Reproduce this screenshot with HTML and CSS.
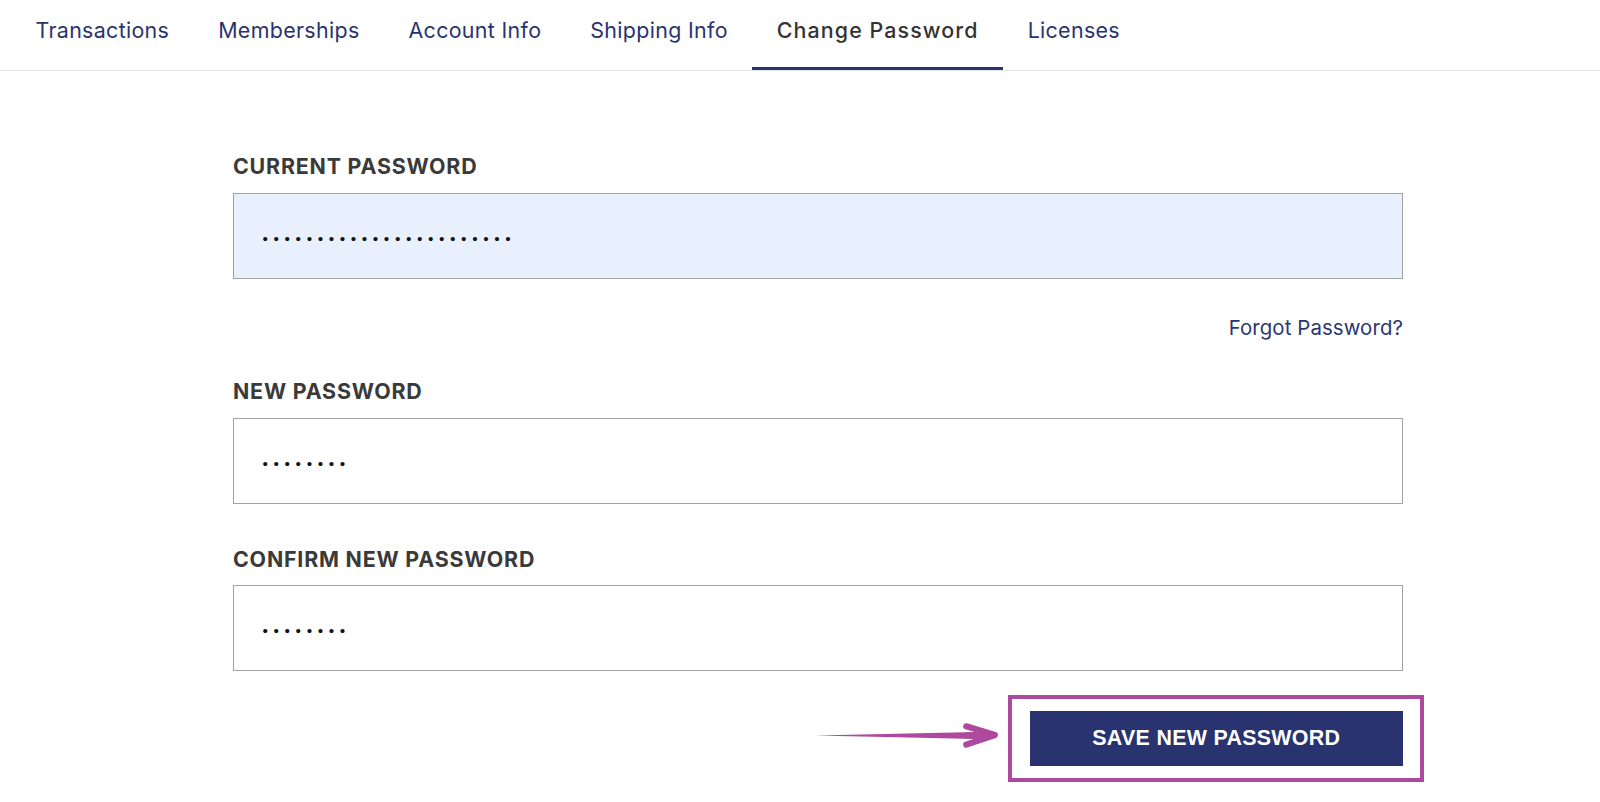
FILE: index.html
```html
<!DOCTYPE html>
<html lang="en">
<head>
<meta charset="utf-8">
<title>Change Password</title>
<link rel="stylesheet" href="styles.css">
</head>
<body>
<nav class="tabs">
  <a class="tab">Transactions</a>
  <a class="tab">Memberships</a>
  <a class="tab">Account Info</a>
  <a class="tab">Shipping Info</a>
  <a class="tab active">Change Password</a>
  <a class="tab">Licenses</a>
</nav>
<form class="pw-form">
  <div class="field">
    <label class="label" for="cur">CURRENT PASSWORD</label>
    <input class="input autofill" id="cur" type="password" value="abcdefghijklmnopqrstuvw">
  </div>
  <div class="forgot-row"><a class="forgot">Forgot Password?</a></div>
  <div class="field second">
    <label class="label" for="new">NEW PASSWORD</label>
    <input class="input" id="new" type="password" value="abcdefgh">
  </div>
  <div class="field third">
    <label class="label" for="conf">CONFIRM NEW PASSWORD</label>
    <input class="input" id="conf" type="password" value="abcdefgh">
  </div>
  <div class="actions">
    <div class="btn-wrap">
      <svg class="arrow" width="189" height="33" viewBox="0 0 185 32">
        <polygon points="2,16 160,12.5 163,16 160,19.5" fill="#ae4a9d"/>
        <path d="M150 7 L178 15.5 L150 25" fill="none" stroke="#ae4a9d" stroke-width="6" stroke-linecap="round" stroke-linejoin="round"/>
        <line x1="150" y1="16" x2="176" y2="15.5" stroke="#ae4a9d" stroke-width="6" stroke-linecap="round"/>
      </svg>
      <button class="save" type="button">SAVE NEW PASSWORD</button>
    </div>
  </div>
</form>
</body>
</html>
```
FILE: styles.css
```css
* { box-sizing: border-box; }
html, body { margin: 0; background: #fff; }
body { font-family: Inter, "Noto Sans", "Liberation Sans", sans-serif; min-height: 100vh; }

.tabs {
  display: flex;
  height: 71px;
  padding-left: 11px;
  border-bottom: 1px solid #e3e3e3;
}
.tab {
  padding: 0 24.5px;
  height: 70px;
  line-height: 61px;
  font-size: 21.4px;
  letter-spacing: 0.33px;
  color: #29346e;
  border-bottom: 3px solid transparent;
  white-space: nowrap;
}
.tab.active {
  color: #333;
  font-weight: 500;
  letter-spacing: 1.1px;
  border-bottom-color: #29346e;
}

.pw-form {
  margin-left: 233px;
  width: 1170px;
  padding-top: 83px;
  padding-bottom: 20px;
}
.label {
  display: block;
  font-size: 21.4px;
  line-height: 24.5px;
  font-weight: 700;
  letter-spacing: 0.8px;
  color: #3a3a3a;
  margin-bottom: 14.5px;
}
.input {
  display: block;
  width: 100%;
  height: 86px;
  border: 1.5px solid #a3a3a3;
  background: #fff;
  padding: 6px 0 0 27px;
  font-family: "DejaVu Sans", sans-serif;
  font-size: 14.3px;
  letter-spacing: 2.6px;
  color: #111;
  outline: none;
}
.input.autofill { background: #e8f0fe; }
.forgot-row {
  display: flex;
  justify-content: flex-end;
  margin-top: 37.3px;
}
.forgot {
  font-size: 20.4px;
  line-height: 24.5px;
  color: #2b3770;
  letter-spacing: 0.1px;
}
.field.second { margin-top: 38.7px; }
.field.third { margin-top: 42.3px; }
.field.third .label { margin-bottom: 13.5px; }

.actions {
  display: flex;
  justify-content: flex-end;
  margin-top: 40px;
}
.btn-wrap { position: relative; }
.btn-wrap::after {
  content: "";
  position: absolute;
  left: -21.4px;
  top: -15.3px;
  right: -20.5px;
  bottom: -16.3px;
  border: 4px solid #ae4a9d;
  pointer-events: none;
}
.save {
  display: block;
  width: 373.5px;
  height: 55px;
  border: 0;
  background: #283370;
  color: #fff;
  font-family: "Liberation Sans", Arial, sans-serif;
  font-size: 21.4px;
  font-weight: 700;
  letter-spacing: 0.3px;
}
.arrow {
  position: absolute;
  left: -216.6px;
  top: 8.2px;
}
```
